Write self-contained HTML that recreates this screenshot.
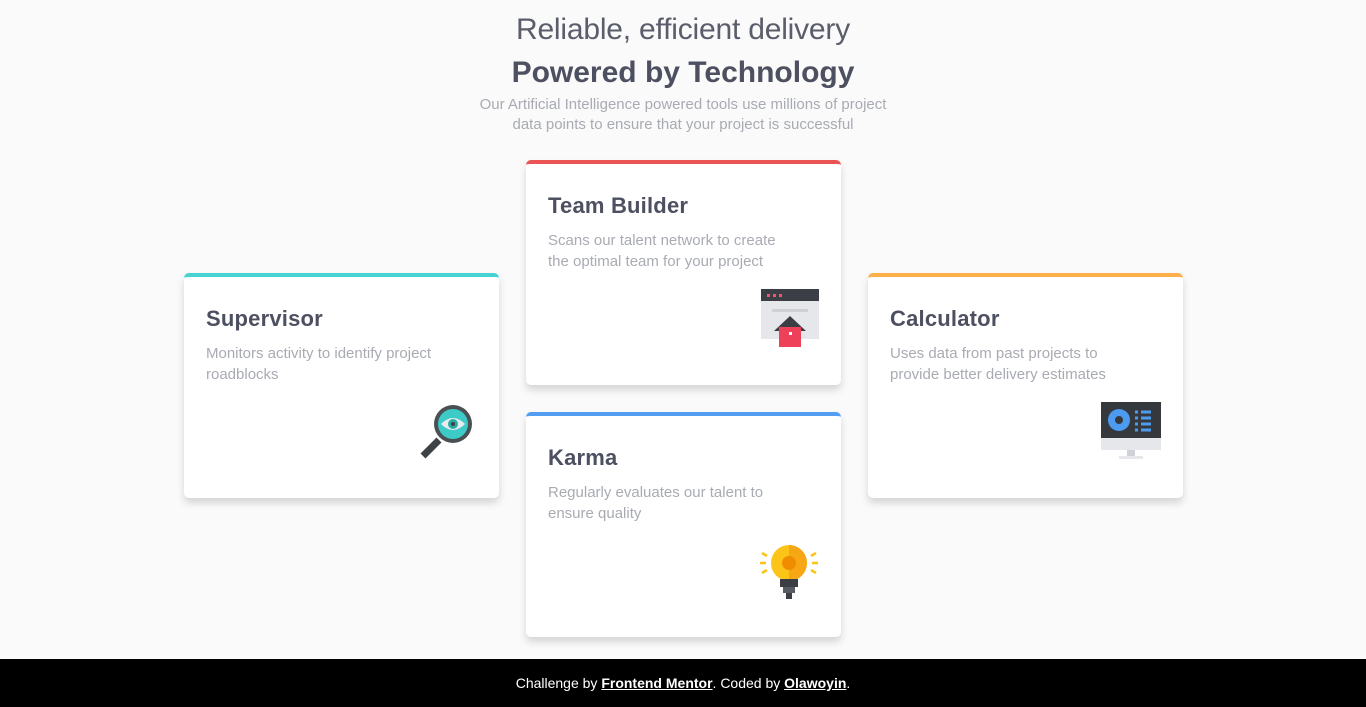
<!DOCTYPE html>
<html><head><meta charset="utf-8"><style>
body{margin:0;width:1366px;height:707px;background:#fafafa;font-family:"Liberation Sans",sans-serif;position:relative;overflow:hidden}
.h1{position:absolute;top:13px;width:100%;text-align:center;font-size:30px;font-weight:300;color:#5a5d6b;letter-spacing:-0.2px}
.h2{position:absolute;top:56px;width:100%;text-align:center;font-size:30px;font-weight:bold;color:#4d5060}
.p{position:absolute;top:95px;width:100%;text-align:center;font-size:15px;line-height:20px;color:#a9abb3}
.card{position:absolute;width:315px;height:225px;background:#fff;border-radius:5px;box-shadow:0 5px 8px rgba(0,0,0,.15);border-top:4px solid;box-sizing:border-box}
.card h3{margin:0;position:absolute;left:22px;top:29px;font-size:22px;font-weight:bold;color:#4d5060;letter-spacing:0.2px}
.card p{margin:0;position:absolute;left:22px;top:66px;width:248px;font-size:15px;line-height:21px;color:#a9abb3;font-weight:300}
.card svg{position:absolute;right:22px;top:125px}
.foot{position:absolute;top:659px;left:0;width:1366px;height:48px;background:#000;color:#fff;font-size:14px;text-align:center;line-height:48px}
.foot b{text-decoration:underline;font-weight:bold}
</style></head><body>
<div class="h1">Reliable, efficient delivery</div>
<div class="h2">Powered by Technology</div>
<div class="p">Our Artificial Intelligence powered tools use millions of project<br>data points to ensure that your project is successful</div>

<div class="card" style="left:184px;top:273px;border-color:#44d3d2">
<h3>Supervisor</h3><p>Monitors activity to identify project roadblocks</p>
<svg width="60" height="60" viewBox="0 0 60 60" style="right:22px"><line x1="6" y1="54" x2="22" y2="38" stroke="#3f4244" stroke-width="7"/><circle cx="36" cy="22" r="19" fill="#4a5054"/><circle cx="36" cy="22" r="15" fill="#3ccbc7"/><path d="M24 22 Q36 10 48 22 Q36 34 24 22Z" fill="#e8ecef"/><circle cx="36" cy="22" r="5" fill="#2aa9a6"/><circle cx="36" cy="22" r="2" fill="#3f4244"/></svg>
</div>

<div class="card" style="left:526px;top:160px;border-color:#ea5454">
<h3>Team Builder</h3><p>Scans our talent network to create the optimal team for your project</p>
<svg width="58" height="58" viewBox="0 0 58 58"><rect x="0" y="0" width="58" height="50" fill="#e6e7eb"/><rect x="0" y="0" width="58" height="12" fill="#3b3f45"/><rect x="6" y="5" width="3" height="3" fill="#f0556d"/><rect x="12" y="5" width="3" height="3" fill="#f0556d"/><rect x="18" y="5" width="3" height="3" fill="#f0556d"/><rect x="11" y="20" width="36" height="3" fill="#cfd0d6"/><path d="M13 42 L29 27 L45 42Z" fill="#3b3f45"/><rect x="18" y="38" width="22" height="20" fill="#ee4058"/><rect x="28" y="43" width="3" height="3" fill="#fff"/></svg>
</div>

<div class="card" style="left:526px;top:412px;border-color:#549ef2">
<h3>Karma</h3><p>Regularly evaluates our talent to ensure quality</p>
<svg width="60" height="60" viewBox="0 0 60 60"><circle cx="30" cy="22" r="18" fill="#fcc419"/><path d="M30 4 A18 18 0 0 1 30 40Z" fill="#f7a614"/><circle cx="30" cy="22" r="7" fill="#f08c00"/><path d="M3 12l5 3M1 22h6M3 32l5-3M57 12l-5 3M59 22h-6M57 32l-5-3" stroke="#fcc419" stroke-width="2.5"/><rect x="21" y="38" width="18" height="8" fill="#3b3f45"/><rect x="24" y="46" width="12" height="6" fill="#575c63"/><rect x="27" y="52" width="6" height="6" fill="#3b3f45"/></svg>
</div>

<div class="card" style="left:868px;top:273px;border-color:#fcaf4a">
<h3>Calculator</h3><p>Uses data from past projects to provide better delivery estimates</p>
<svg width="60" height="60" viewBox="0 0 60 60"><rect x="0" y="0" width="60" height="48" fill="#e6e7eb"/><rect x="0" y="0" width="60" height="36" fill="#35393e"/><circle cx="18" cy="18" r="11" fill="#4d9bf0"/><circle cx="18" cy="18" r="4" fill="#35393e"/><path d="M34 10h3M40 10h10M34 16h3M40 16h10M34 22h3M40 22h10M34 28h3M40 28h10" stroke="#4d9bf0" stroke-width="3"/><rect x="26" y="48" width="8" height="6" fill="#d0d1d6"/><rect x="18" y="54" width="24" height="3" fill="#e6e7eb"/></svg>
</div>

<div class="foot">Challenge by <b>Frontend Mentor</b>. Coded by <b>Olawoyin</b>.</div>
</body></html>
